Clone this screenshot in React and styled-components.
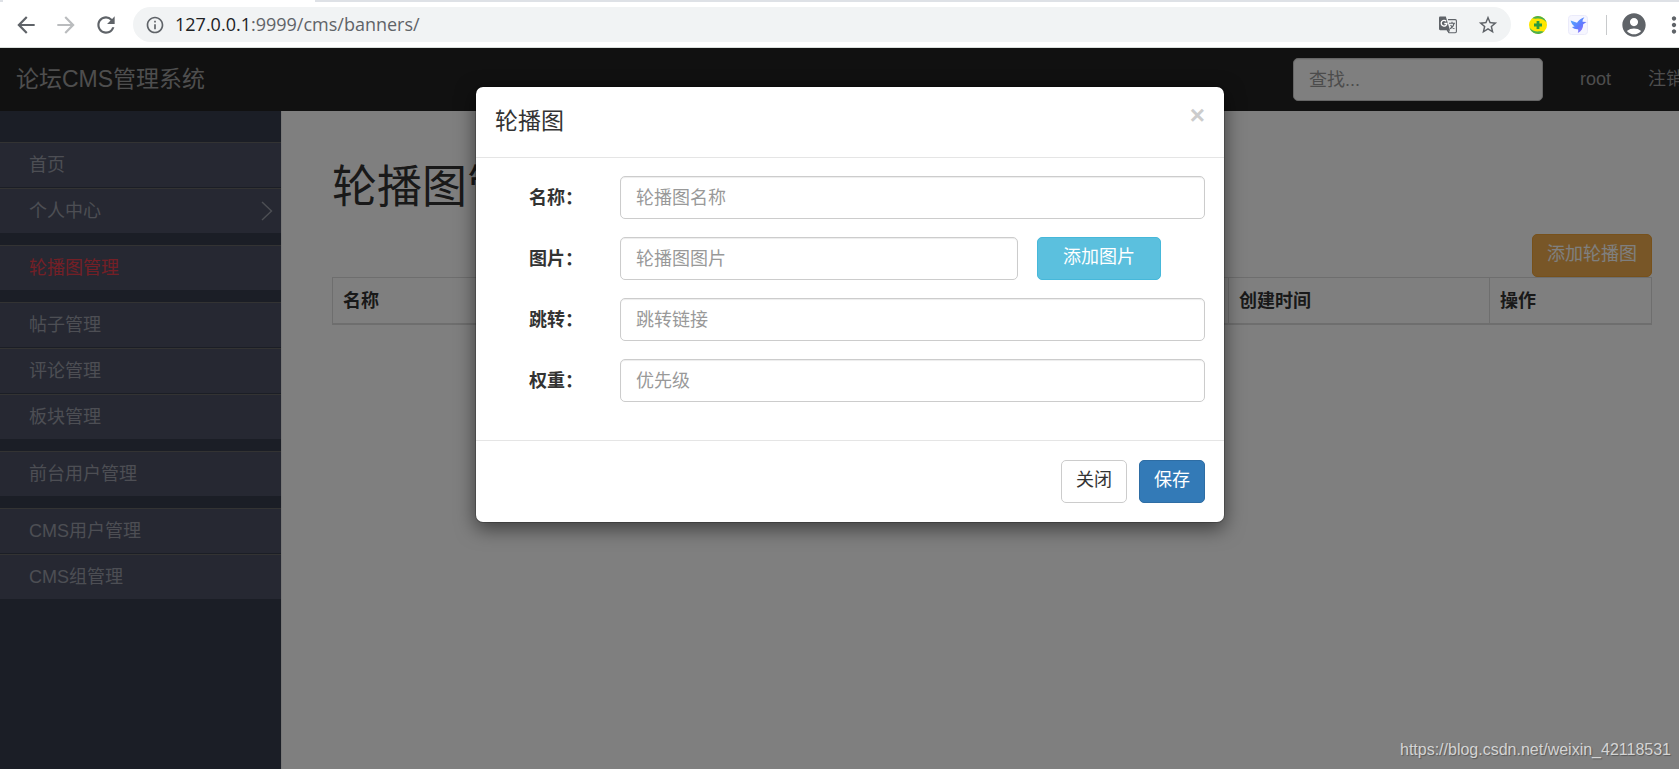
import React, { useState } from 'react';
import styled, { createGlobalStyle, css } from 'styled-components';
import {
	MdAccountCircle,
	MdArrowBack,
	MdArrowForward,
	MdMoreVert,
	MdOutlineInfo,
	MdRefresh,
	MdStarBorder
} from 'react-icons/md';

const menuGroups = [
	[ { label: '首页' }, { label: '个人中心', expandable: true } ],
	[ { label: '轮播图管理', active: true } ],
	[ { label: '帖子管理' }, { label: '评论管理' }, { label: '板块管理' } ],
	[ { label: '前台用户管理' } ],
	[ { label: 'CMS用户管理' }, { label: 'CMS组管理' } ]
];

const fields = [
	{ id: 'name', label: '名称：', placeholder: '轮播图名称' },
	{ id: 'image_url', label: '图片：', placeholder: '轮播图图片', upload: true },
	{ id: 'link_url', label: '跳转：', placeholder: '跳转链接' },
	{ id: 'priority', label: '权重：', placeholder: '优先级' }
];

const TranslateIcon = () => (
	<svg width='18' height='18' viewBox='0 0 18 18' fill='none'>
		<path d='M9 3.6h7.2c.7 0 1.2.5 1.2 1.2v10.8c0 .7-.5 1.2-1.2 1.2H10l-2-3' stroke='#5f6368' strokeWidth='1.1' />
		<path d='M10 7.2h6M13 5.8v1.4M15 7.4c-.4 2.6-2 4.4-4 5.4M11.6 9c.8 1.6 2 2.8 3.8 3.8' stroke='#5f6368' strokeWidth='1.1' />
		<path d='M1.2.4h5.6L11 14.2H1.2C.6 14.2 0 13.7 0 13V1.6C0 .9.6.4 1.2.4z' fill='#5f6368' />
		<path d='M7.2 5.2A2.9 2.9 0 1 0 8 7.5H5.3' stroke='#fff' strokeWidth='1.3' />
		<path d='M8 14.2h3L9.6 17z' fill='#5f6368' />
	</svg>
);

const ShieldIcon = () => (
	<svg width='18' height='18' viewBox='0 0 18 18'>
		<circle cx='9' cy='9' r='9' fill='#ffe600' />
		<path d='M3.2 2.2A9 9 0 0 1 17.6 6.6C15.6 3.8 12.6 2.6 9.4 2.6 7 2.6 5 2.8 3.2 2.200z' fill='#4caf50' />
		<path d='M14.8 15.8A9 9 0 0 1 .4 11.4C2.4 14.2 5.4 15.4 8.600 15.4c2.400 0 4.400-.2 6.200.4z' fill='#4caf50' />
		<path d='M7.6 5h2.8v2.6H13v2.8h-2.6V13H7.6v-2.6H5V7.6h2.6z' fill='#2e9b3f' />
	</svg>
);

const BirdIcon = () => (
	<svg width='20' height='20' viewBox='0 0 20 20'>
		<defs>
			<linearGradient id='bird' x1='0' y1='0' x2='1' y2='1'>
				<stop offset='0' stopColor='#4fb4ff' />
				<stop offset='.55' stopColor='#5f7bff' />
				<stop offset='1' stopColor='#b06cf5' />
			</linearGradient>
		</defs>
		<rect x='.5' y='.5' width='19' height='19' rx='3' fill='#f6f6ff' stroke='#ebebfa' />
		<path d='M2.6 5.4 9 7.8C10.6 5 13 3.200 16.400 2.200 14.800 4.200 14.400 5.600 14.600 6.800l4 .2-3.400 2.200c0 4-1.800 6.800-5.400 8.800.6-1.800.6-2.800.2-3.800-2.400.2-4.600-.6-6-2.200l2.600-.6C4.600 10 3.200 8 2.600 5.400z' fill='url(#bird)' />
	</svg>
);

const ChevronIcon = () => (
	<svg width='12' height='20' viewBox='0 0 12 20' fill='none' stroke='currentColor' strokeWidth='1.4'>
		<path d='M1 1l9.5 9L1 19' />
	</svg>
);

const BrowserBar = () => (
	<React.Fragment>
		<TabStrip>
			<ActiveTab />
		</TabStrip>
		<Toolbar>
			<ToolButton aria-label='back'>
				<MdArrowBack size={26} />
			</ToolButton>
			<ToolButton aria-label='forward' disabled>
				<MdArrowForward size={26} />
			</ToolButton>
			<ToolButton aria-label='reload'>
				<MdRefresh size={26} />
			</ToolButton>
			<AddressBar>
				<MdOutlineInfo size={20} />
				<Address>
					<Host>127.0.0.1</Host>:9999/cms/banners/
				</Address>
				<TranslateIcon />
				<MdStarBorder size={22} />
			</AddressBar>
			<ToolButton aria-label='shield'>
				<ShieldIcon />
			</ToolButton>
			<ToolButton aria-label='bird'>
				<BirdIcon />
			</ToolButton>
			<ToolDivider />
			<ToolButton aria-label='account'>
				<MdAccountCircle size={28} />
			</ToolButton>
			<ToolButton aria-label='menu'>
				<MdMoreVert size={26} />
			</ToolButton>
		</Toolbar>
	</React.Fragment>
);

const BannerDialog = ({ onClose }) => (
	<Backdrop>
		<Dialog role='dialog' aria-labelledby='dialog-title'>
			<DialogHeader>
				<DialogTitle id='dialog-title'>轮播图</DialogTitle>
				<CloseButton type='button' onClick={onClose}>
					×
				</CloseButton>
			</DialogHeader>
			<DialogBody>
				{fields.map(field => (
					<FormRow key={field.id}>
						<FormLabel htmlFor={field.id}>{field.label}</FormLabel>
						<FieldGroup $upload={field.upload}>
							<TextInput id={field.id} type='text' placeholder={field.placeholder} />
							{field.upload && (
								<UploadButton type='button' $variant='info'>
									添加图片
								</UploadButton>
							)}
						</FieldGroup>
					</FormRow>
				))}
			</DialogBody>
			<DialogFooter>
				<Button type='button' $variant='default' onClick={onClose}>
					关闭
				</Button>
				<Button type='button' $variant='primary'>
					保存
				</Button>
			</DialogFooter>
		</Dialog>
	</Backdrop>
);

const App = () => {
	const [ open, setOpen ] = useState(true);

	return (
		<Screen>
			<GlobalStyle />
			<BrowserWindow>
				<BrowserBar />
				<Page>
					<Navbar>
						<Brand href='#'>论坛CMS管理系统</Brand>
						<SearchInput type='text' aria-label='查找' placeholder='查找...' />
						<NavLink href='#'>root</NavLink>
						<NavLink href='#'>注销</NavLink>
					</Navbar>
					<Columns>
						<Sidebar>
							{menuGroups.map((group, index) => (
								<MenuGroup key={index}>
									{group.map(item => (
										<li key={item.label}>
											<MenuLink href='#' $active={item.active}>
												{item.label}
												{item.expandable && <ChevronIcon />}
											</MenuLink>
										</li>
									))}
								</MenuGroup>
							))}
						</Sidebar>
						<Main>
							<PageTitle>轮播图管理</PageTitle>
							<Actions>
								<Button type='button' $variant='warning' onClick={() => setOpen(true)}>
									添加轮播图
								</Button>
							</Actions>
							<Table>
								<thead>
									<tr>
										<HeadCell>名称</HeadCell>
										<HeadCell $width='261px'>创建时间</HeadCell>
										<HeadCell $width='162px'>操作</HeadCell>
									</tr>
								</thead>
							</Table>
						</Main>
					</Columns>
					{open && <BannerDialog onClose={() => setOpen(false)} />}
				</Page>
			</BrowserWindow>
			<Watermark>https://blog.csdn.net/weixin_42118531</Watermark>
		</Screen>
	);
};

export default App;

const textFont = '"Liberation Sans", "Noto Sans CJK SC", sans-serif';
const controlHeight = '43px';

const variants = {
	default: { color: '#333', background: '#fff', border: '#ccc' },
	primary: { color: '#fff', background: '#337ab7', border: '#2e6da4' },
	info: { color: '#fff', background: '#5bc0de', border: '#46b8da' },
	warning: { color: '#fff', background: '#f0ad4e', border: '#eea236' }
};

const GlobalStyle = createGlobalStyle`
	* {
		box-sizing: border-box;
	}

	body {
		margin: 0;
		color: #333;
		font-family: ${textFont};
		font-size: 18px;
		line-height: 25px;
	}
`;

const Screen = styled.div`
	position: relative;
	height: 100vh;
	overflow: hidden;
`;

// the window runs a little past the right edge of the screen
const BrowserWindow = styled.div`
	display: flex;
	flex-direction: column;
	width: calc(100% + 21px);
	height: 100%;
`;

const TabStrip = styled.div`
	height: 2px;
	padding-left: 3px;
	background-color: #dee1e6;
`;

const ActiveTab = styled.div`
	width: 312px;
	height: 2px;
	background-color: #fff;
`;

const Toolbar = styled.div`
	display: flex;
	align-items: center;
	height: 46px;
	padding: 0 6px;
	border-bottom: 1px solid #dadfdc;
	background-color: #fff;
`;

const ToolButton = styled.button`
	display: flex;
	align-items: center;
	justify-content: center;
	width: 40px;
	height: 35px;
	padding: 0;
	border: 0;
	background: none;
	color: ${props => (props.disabled ? '#babcbe' : '#5f6368')};
`;

const ToolDivider = styled.div`
	width: 1px;
	height: 20px;
	margin: 0 7px 0 8px;
	background-color: #c8cacc;
`;

const AddressBar = styled.div`
	display: flex;
	flex: 1;
	align-items: center;
	gap: 20px;
	height: 35px;
	margin: 0 7px;
	padding: 0 12px;
	border-radius: 18px;
	background-color: #f1f3f4;
	color: #5f6368;
`;

const Address = styled.div`
	flex: 1;
	margin-left: -10px;
	font-family: "Open Sans", sans-serif;
	font-size: 18px;
`;

const Host = styled.span`
	color: #202124;
`;

const Page = styled.div`
	position: relative;
	display: flex;
	flex: 1;
	flex-direction: column;
`;

const Navbar = styled.nav`
	display: flex;
	align-items: center;
	height: 63px;
	padding: 0 16px;
	background-color: #222;
`;

const Brand = styled.a`
	margin-right: auto;
	color: #9d9d9d;
	font-size: 23px;
	text-decoration: none;
`;

const NavLink = styled.a`
	margin-left: 37px;
	color: #9d9d9d;
	text-decoration: none;
`;

const TextInput = styled.input`
	flex: 1;
	min-width: 0;
	height: ${controlHeight};
	padding: 1px 15px 0;
	border: 1px solid #ccc;
	border-radius: 5px;
	background-color: #fff;
	box-shadow: inset 0 1px 1px rgba(0, 0, 0, .075);
	color: #555;
	font-family: ${textFont};
	font-size: 18px;

	&::placeholder {
		color: #999;
		opacity: 1;
	}
`;

const SearchInput = styled(TextInput)`
	flex: 0 0 250px;
`;

const Columns = styled.div`
	display: flex;
	flex: 1;
`;

const Sidebar = styled.aside`
	width: 281px;
	padding-top: 31px;
	background-color: #363c4c;
`;

const MenuGroup = styled.ul`
	display: grid;
	gap: 1px;
	margin: 0 0 12px;
	padding: 0;
	list-style: none;
`;

const MenuLink = styled.a`
	display: flex;
	align-items: center;
	justify-content: space-between;
	height: 45px;
	padding: 0 8px 0 29px;
	border-top: 1px solid #666;
	background-color: #4c5164;
	color: ${props => (props.$active ? '#e83e4c' : '#9a9da8')};
	text-decoration: none;
`;

const Main = styled.main`
	flex: 1;
	padding: 52px 48px 0 50px;
	border-left: 1px solid #eee;
	background-color: #fff;
`;

const PageTitle = styled.h1`
	margin: 0 0 21px;
	font-size: 45px;
	font-weight: 400;
	line-height: 50px;
`;

const Actions = styled.div`
	display: flex;
	justify-content: flex-end;
`;

const Button = styled.button`
	height: ${controlHeight};
	padding: 0 14px 2px;
	border: 1px solid;
	border-radius: 5px;
	font-family: ${textFont};
	font-size: 18px;
	line-height: 25px;
	${props => css`
		border-color: ${variants[props.$variant].border};
		background-color: ${variants[props.$variant].background};
		color: ${variants[props.$variant].color};
	`}
`;

const UploadButton = styled(Button)`
	width: 124px;
`;

const Table = styled.table`
	width: 100%;
	border: 1px solid #ddd;
	border-collapse: collapse;
	table-layout: fixed;
`;

const HeadCell = styled.th`
	width: ${props => props.$width || 'auto'};
	padding: 11px 10px 9px;
	border: 1px solid #ddd;
	border-bottom-width: 2px;
	text-align: left;
`;

const Backdrop = styled.div`
	position: absolute;
	top: 0;
	right: 0;
	bottom: 0;
	left: 0;
	padding-top: 38px;
	background-color: rgba(0, 0, 0, .5);
`;

const Dialog = styled.section`
	max-width: 750px;
	margin: 0 auto;
	border: 1px solid rgba(0, 0, 0, .2);
	border-radius: 8px;
	background-color: #fff;
	background-clip: padding-box;
	box-shadow: 0 6px 19px rgba(0, 0, 0, .5);
`;

const DialogHeader = styled.header`
	display: flex;
	align-items: flex-start;
	justify-content: space-between;
	height: 71px;
	padding: 19px;
	border-bottom: 1px solid #e5e5e5;
`;

const DialogTitle = styled.h4`
	margin: 0;
	font-size: 23px;
	font-weight: 400;
	line-height: 30px;
`;

const CloseButton = styled.button`
	padding: 0;
	border: 0;
	background: none;
	color: #ccc;
	font-family: ${textFont};
	font-size: 26px;
	font-weight: 700;
	line-height: 18px;
`;

const DialogBody = styled.div`
	display: grid;
	gap: 18px;
	padding: 18px 19px 38px;
`;

const FormRow = styled.div`
	display: grid;
	grid-template-columns: 88px 1fr;
	gap: 37px;
	align-items: center;
`;

const FormLabel = styled.label`
	padding-top: 2px;
	font-weight: 700;
	text-align: right;
`;

const FieldGroup = styled.div`
	display: flex;
	gap: 19px;
	padding-right: ${props => (props.$upload ? '44px' : 0)};
`;

const DialogFooter = styled.footer`
	display: flex;
	justify-content: flex-end;
	gap: 12px;
	padding: 19px;
	border-top: 1px solid #e5e5e5;
`;

const Watermark = styled.div`
	position: absolute;
	right: 8px;
	bottom: 7px;
	color: #d4d4d4;
	font-size: 16px;
	text-shadow: 1px 1px 1px rgba(0, 0, 0, .3);
`;
